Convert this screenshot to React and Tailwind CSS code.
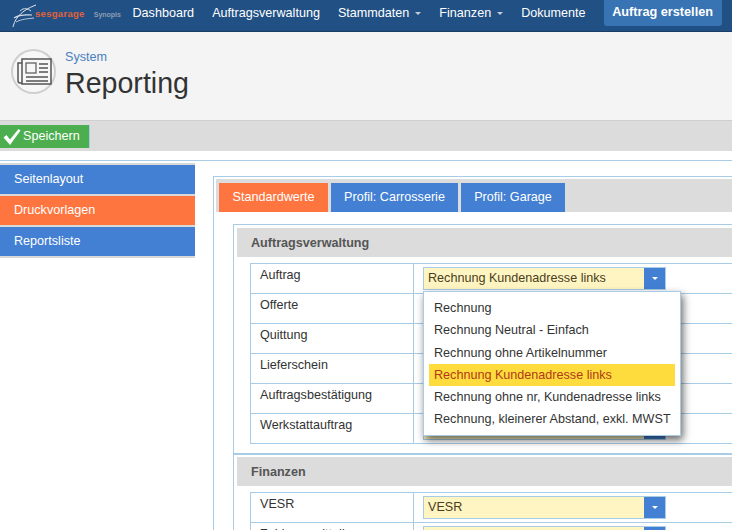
import React from "react";

const navItems = [
  { text: "Dashboard" },
  { text: "Auftragsverwaltung" },
  { text: "Stammdaten", caret: true },
  { text: "Finanzen", caret: true },
  { text: "Dokumente" },
];

const sideItems = [
  { text: "Seitenlayout", leading: "leading-[28px]" },
  { text: "Druckvorlagen", active: true, leading: "leading-[28px]" },
  { text: "Reportsliste", leading: "leading-[29px]" },
];

const tabs = [
  { text: "Standardwerte", active: true, width: "w-[109px]" },
  { text: "Profil: Carrosserie", width: "w-[127px]" },
  { text: "Profil: Garage", width: "w-[104px]" },
];

const auftragRows = [
  { label: "Auftrag", value: "Rechnung Kundenadresse links", open: true },
  { label: "Offerte" },
  { label: "Quittung" },
  { label: "Lieferschein" },
  { label: "Auftragsbestätigung" },
  { label: "Werkstattauftrag" },
];

const finanzRows = [{ label: "VESR", value: "VESR" }, { label: "Zahlungsmitteilung" }];

const options = [
  "Rechnung",
  "Rechnung Neutral - Einfach",
  "Rechnung ohne Artikelnummer",
  "Rechnung Kundenadresse links",
  "Rechnung ohne nr, Kundenadresse links",
  "Rechnung, kleinerer Abstand, exkl. MWST",
];

const Logo = () => (
  <div className="flex items-center w-[132.5px] shrink-0 pl-[12px]">
    <svg width="26" height="24" viewBox="0 0 26 24" fill="none" className="shrink-0">
      <path d="M1 23C3 15 8 7 24 1" stroke="#e4e9f0" strokeWidth="1" />
      <path d="M2 14C8 10 14 11 20 11" stroke="#d5dde8" strokeWidth="1.2" />
      <path d="M4 18C10 15 14 15 22 14" stroke="#bccadb" strokeWidth="1" />
      <path d="M8 7C12 3 16 5 19 7" stroke="#d5dde8" strokeWidth="1" />
    </svg>
    <span className="font-['Liberation_Sans',sans-serif] font-bold text-[9.5px] tracking-[0.3px] text-[#e0623a] -mt-[3px] -ml-[3px]">
      sesgarage
    </span>
    <span className="font-['Liberation_Sans',sans-serif] font-bold text-[7px] text-[#8d9cb3] ml-[9px]">
      Synopis
    </span>
  </div>
);

const NewsIcon = () => (
  <div className="w-[45px] h-[45px] rounded-full border-2 border-[#cfcfcf] bg-[#f7f7f7] shrink-0 flex items-center justify-center">
    <svg width="36" height="28" viewBox="0 0 36 28" fill="none" stroke="#555" strokeWidth="1.5">
      <path d="M6 5H2V22.5Q2 25 4 25H6" />
      <rect x="6" y="1" width="29" height="25" />
      <rect x="10" y="5" width="10" height="10" strokeWidth="1.2" />
      <path d="M23 6H32M23 10H32M23 14H32M10 19H32M10 23H32" />
    </svg>
  </div>
);

const Select = ({ value }) => (
  <div className="flex w-[243px] h-[23px] border border-[#a8cbe6] bg-[#fff5c2]">
    <div className="flex-1 pl-[4px] leading-[21px] text-[#4a3d20]">{value}</div>
    <div className="w-[21px] bg-[#4380d3] flex items-center justify-center">
      <span className="w-0 h-0 border-x-[3.5px] border-t-[3.5px] border-x-transparent border-t-white" />
    </div>
  </div>
);

const Dropdown = () => (
  <div className="absolute z-10 left-[9px] top-[27px] w-[258px] h-[145px] bg-white border border-[#a8cbe6] pt-[5px] px-[5px] shadow-[2px_4px_8px_rgba(0,0,0,0.6)]">
    {options.map((option, index) => (
      <div
        key={index}
        className={`h-[22.3px] leading-[22px] pl-[5px] ${
          index === 3 ? "bg-[#ffdc3d] text-[#b03a1a]" : "text-[#333]"
        }`}
      >
        {option}
      </div>
    ))}
  </div>
);

const Section = ({ title, rows, tight }) => (
  <div className={`border-t border-[#a8cbe6] pl-[3px] ${tight ? "pt-[2px]" : "pt-[3px]"}`}>
    <div className="h-[29px] bg-[#dcdcdc] pl-[14px] leading-[30px] font-bold text-[#555]">{title}</div>
    <div className="mt-[6px] ml-[13px] border border-r-0 border-[#a8cbe6]">
      {rows.map((row, index) => (
        <div
          key={row.label}
          className={`flex ${index > 0 ? "h-[30px] border-t border-[#a8cbe6]" : "h-[29px]"}`}
        >
          <div className="w-[163px] shrink-0 border-r border-[#a8cbe6] pl-[9px] pt-[2px] text-[#333]">
            {row.label}
          </div>
          <div className="relative pl-[9px] pt-[3px]">
            <Select value={row.value} />
            {row.open && <Dropdown />}
          </div>
        </div>
      ))}
    </div>
  </div>
);

export default function App() {
  return (
    <div className="w-full h-screen overflow-hidden bg-white font-['Liberation_Sans',Arial,sans-serif] text-[12.6px]">
      {/* Top navigation */}
      <nav className="flex h-[32px] bg-[#215084] border-b border-[#1a3d66] text-white">
        <Logo />
        <div className="flex items-start gap-[18px]">
          {navItems.map((item) => (
            <div key={item.text} className="flex items-center h-[26px] gap-[6px]">
              {item.text}
              {item.caret && (
                <span className="w-0 h-0 border-x-[3.5px] border-t-[3.5px] border-x-transparent border-t-[#c5ccd6]" />
              )}
            </div>
          ))}
          <div className="h-[26px] w-[118px] rounded-b-[3px] bg-[#3873b3] font-bold text-[12.7px] leading-[25px] text-center">
            Auftrag erstellen
          </div>
        </div>
      </nav>

      {/* Page title */}
      <header className="flex h-[89px] bg-[#f4f4f4] border-b border-[#cfcfcf] pl-[11px] pt-[17px]">
        <NewsIcon />
        <div className="ml-[9px]">
          <div className="text-[#4a7fc0] leading-[16px]">System</div>
          <h1 className="text-[28.6px] leading-[36px] text-[#333]">Reporting</h1>
        </div>
      </header>

      {/* Toolbar */}
      <div className="h-[30px] bg-[#dcdcdc] pt-[4px]">
        <button className="flex items-center w-[90px] h-[23px] bg-[#4cae4f] border-r border-[#a8cbe6] text-white pl-[3px] gap-[2px]">
          <svg width="18" height="18" viewBox="0 0 18 17">
            <path d="M0.5 9L3.5 6.5L7 11L15.5 0.5L17.5 2L7 16.5Z" fill="white" />
          </svg>
          Speichern
        </button>
      </div>

      <div className="mt-[9px] border-t border-[#a8cbe6] flex items-start">
        {/* Sidebar */}
        <aside className="w-[195px] shrink-0 mt-[2px] bg-[#d8d8d8] pt-[2px] pb-[2px] flex flex-col gap-[2px] text-white">
          {sideItems.map((item) => (
            <div
              key={item.text}
              className={`h-[29px] pl-[14px] ${item.leading} ${item.active ? "bg-[#ff7540]" : "bg-[#4380d3]"}`}
            >
              {item.text}
            </div>
          ))}
        </aside>

        {/* Tabs and forms */}
        <main className="ml-[18px] mt-[15px] w-[640px] shrink-0 border-t border-l border-[#a8cbe6] pt-[2px] pl-[2px]">
          <div className="flex h-[33px] items-end gap-[3px] bg-[#dcdcdc] pl-[3px]">
            {tabs.map((tab) => (
              <div
                key={tab.text}
                className={`h-[29px] text-center leading-[28px] text-white ${tab.width} ${
                  tab.active ? "bg-[#ff7540]" : "bg-[#4380d3]"
                }`}
              >
                {tab.text}
              </div>
            ))}
          </div>
          <div className="ml-[17px] mt-[12px] border-l border-[#a8cbe6]">
            <Section title="Auftragsverwaltung" rows={auftragRows} />
            <div className="mt-[9px] border-t border-[#a8cbe6]">
              <Section title="Finanzen" rows={finanzRows} tight />
            </div>
          </div>
        </main>
      </div>
    </div>
  );
}
